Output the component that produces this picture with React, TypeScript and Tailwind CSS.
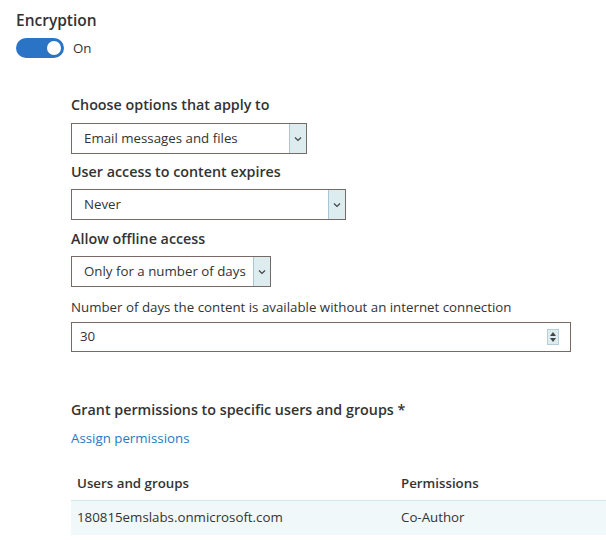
import React, {useState} from "react";

function SelectBox({value, width}: {value: string, width: string}) {
    return (
        <div className={`flex h-[31px] border border-[#776a66] bg-white ${width}`}>
            <div className="flex-1 flex items-center pl-[12px] text-[13.3px] text-[#333] whitespace-nowrap">{value}</div>
            <div className="w-[17px] flex items-center justify-center bg-[#dcecef] border-l border-[#a9c6d6]">
                <svg width="8" height="6" viewBox="0 0 8 6"><path d="M1 1.5 L4 4.5 L7 1.5" fill="none" stroke="#444" strokeWidth="1.2"/></svg>
            </div>
        </div>
    )
}

export default function App() {
    const [on, setOn] = useState(true)

    return (
        <div className="w-[606px] h-[540px] bg-white overflow-hidden text-[#333] font-['Open_Sans','Noto_Sans',sans-serif]">
            <div className="pl-[16px] pt-[9px]">
                <div className="text-[15.5px] font-semibold leading-[22px]">Encryption</div>
                <div className="flex items-center gap-[9px] mt-[7px] h-[20px]">
                    <button
                        onClick={() => setOn(!on)}
                        className="w-[48px] h-[20px] rounded-full bg-[#2b74c5] flex items-center justify-end pr-[3px]">
                        <span className="w-[14px] h-[14px] rounded-full bg-white"/>
                    </button>
                    <span className="text-[13.3px] leading-[20px]">{on ? "On" : "Off"}</span>
                </div>
            </div>

            <div className="pl-[71px] pt-[37px]">
                <div className="text-[14.3px] font-semibold leading-[20px]">Choose options that apply to</div>
                <div className="mt-[8px]"><SelectBox value="Email messages and files" width="w-[236px]"/></div>

                <div className="text-[14.3px] font-semibold leading-[20px] mt-[8px]">User access to content expires</div>
                <div className="mt-[7px]"><SelectBox value="Never" width="w-[275px]"/></div>

                <div className="text-[14.3px] font-semibold leading-[20px] mt-[9px]">Allow offline access</div>
                <div className="mt-[7px]"><SelectBox value="Only for a number of days" width="w-[200px]"/></div>

                <div className="text-[13.3px] leading-[20px] mt-[10px] whitespace-nowrap">Number of days the content is available without an internet connection</div>
                <div className="mt-[5px] w-[500px] h-[30px] border border-[#776a66] flex items-center pl-[8px] pr-[11px]">
                    <span className="flex-1 text-[13.3px]">30</span>
                    <div className="w-[12px] h-[16px] bg-[#dcecef] flex flex-col items-center justify-center gap-[2px] border border-[#b4cfdc]">
                        <svg width="6" height="4" viewBox="0 0 6 4"><path d="M0 4 L3 0 L6 4Z" fill="#444"/></svg>
                        <svg width="6" height="4" viewBox="0 0 6 4"><path d="M0 0 L3 4 L6 0Z" fill="#444"/></svg>
                    </div>
                </div>

                <div className="text-[14.3px] font-semibold leading-[20px] mt-[48px]">Grant permissions to specific users and groups *</div>
                <a className="block text-[13.3px] text-[#2a78c4] mt-[8px] leading-[20px]">Assign permissions</a>

                <div className="mt-[20px]">
                    <div className="flex h-[33px] items-center border-b border-[#d3e6ec] text-[13.3px] font-semibold">
                        <div className="w-[330px] pl-[6px]">Users and groups</div>
                        <div>Permissions</div>
                    </div>
                    <div className="flex h-[34px] items-center bg-[#f1f8f9] text-[13.3px]">
                        <div className="w-[330px] pl-[6px]">180815emslabs.onmicrosoft.com</div>
                        <div>Co-Author</div>
                    </div>
                </div>
            </div>
        </div>
    )
}
